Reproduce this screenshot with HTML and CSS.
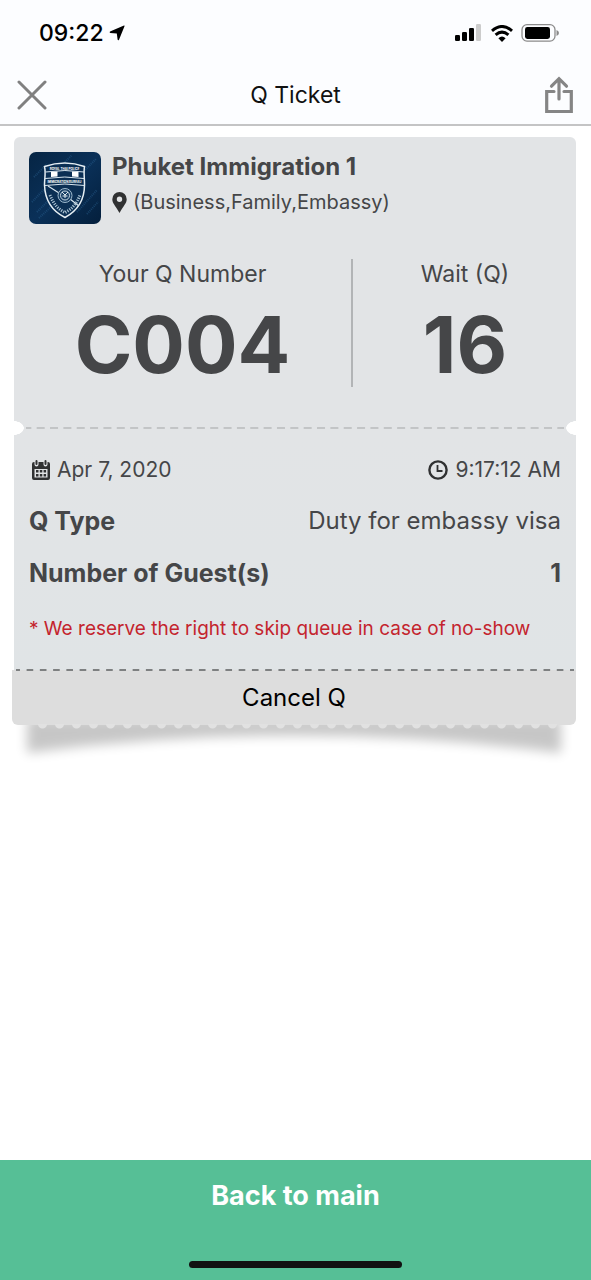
FILE: index.html
```html
<!DOCTYPE html>
<html lang="en">
<head>
<meta charset="utf-8">
<meta name="viewport" content="width=device-width, initial-scale=1">
<title>Q Ticket</title>
<link rel="stylesheet" href="styles.css">
</head>
<body>
<div class="screen">
  <header class="top">
    <div class="status">
      <div class="status-time">
        <span>09:22</span>
        <svg width="16" height="16" viewBox="0 0 16 16" aria-hidden="true"><path d="M1 6.400 15 .6Q15.800.4 15.500 1.200L10 14.800Q9 16 8.600 14.600L7.800 8.600 1.300 8Q0 7.300 1 6.400Z"/></svg>
      </div>
      <div class="status-icons">
        <svg width="28" height="18" viewBox="0 0 28 18" aria-hidden="true"><rect x="0" y="11" width="5" height="6" rx="1.300"/><rect x="7" y="8" width="5" height="9" rx="1.300"/><rect x="14" y="4" width="5" height="13" rx="1.300"/><rect x="21" y="0" width="5" height="17" rx="1.300" fill="#ccc"/></svg>
        <svg width="22" height="17" viewBox="0 0 22 17" aria-hidden="true"><g fill="none" stroke="#000" stroke-width="3"><path d="M1 5.800Q11-2.800 21 5.800"/><path d="M4.600 9.900Q11 4.300 17.400 9.900"/></g><path d="M7.400 13.200Q11 10 14.600 13.200L11 17Z"/></svg>
        <svg width="38" height="18" viewBox="0 0 38 18" aria-hidden="true"><rect x="1" y=".7" width="33" height="16.400" rx="5" fill="none" stroke="#8b8b8b" stroke-width="1.300"/><rect x="4" y="3" width="25" height="12" rx="2.400"/><path d="M35.500 6Q38 7 38 9T35.500 12Z" fill="#8b8b8b"/></svg>
      </div>
    </div>
    <nav class="nav">
      <button class="icon-button" type="button" aria-label="Close">
        <svg width="30" height="30" viewBox="0 0 30 30"><path d="m2 2 26 26M28 2 2 28" fill="none" stroke="#808080" stroke-width="3" stroke-linecap="round"/></svg>
      </button>
      <h1 class="nav-title">Q Ticket</h1>
      <button class="icon-button" type="button" aria-label="Share">
        <svg width="30" height="38" viewBox="0 0 30 38"><path d="M10 15.500H2.700V35.500H27.300V15.500H20M15 23V3M7.500 10.200 15 2.700 22.500 10.200" fill="none" stroke="#858585" stroke-width="3.200" stroke-linecap="round" stroke-linejoin="miter"/></svg>
      </button>
    </nav>
  </header>

  <main class="content">
    <article class="ticket">
      <section class="ticket-main">
        <div class="place">
          <svg class="logo" viewBox="0 0 72 72" role="img" aria-label="Royal Thai Police Immigration Bureau">
            <defs>
              <linearGradient id="navy" x1="0" y1="0" x2="1" y2="1"><stop offset="0" stop-color="#062544"/><stop offset=".5" stop-color="#0a3058"/><stop offset="1" stop-color="#041f3c"/></linearGradient>
            </defs>
            <rect width="72" height="72" rx="7" fill="url(#navy)"/>
            <path d="M3 50 22 30M8 60 26 42M5 25 18 12M48 60 68 38M52 22 67 7M10 66 24 53M58 62 69 50M36 10 43 3" stroke="#2c6494" stroke-width="2" stroke-dasharray="1 1" opacity=".45"/>
            <path d="M15.500 14.500Q36 7.500 55.500 14.500C54.500 20 55.500 25 55.500 33C55.500 49 48 59 36 65.500C23 59 16 49 15.500 33C15.500 26 17 21 15.500 14.500Z" fill="#0b2f54" stroke="#e4edf3" stroke-width="1.500"/>
            <path d="M16.500 20Q36 17 55 20M16 26.500Q36 23.500 55 26.500M16 33.500Q36 30.500 55.500 33.500" fill="none" stroke="#d8e5ee"/>
            <path d="M22 20 28.500 19.500V24.400L22 25ZM43 19.500 49.500 20V25L43 24.400Z" fill="#fff"/>
            <path d="m19 34 11 7M41 47l9 7" stroke="#d8e5ee" stroke-width="1.200"/>
            <circle cx="36" cy="43.500" r="7" fill="#183f65" stroke="#9db8cc"/><circle cx="36" cy="43.500" r="4.500" fill="none" stroke="#c8d9e5"/><path d="m33 40 3 3 3-3M36 42v4M33.500 44h5" fill="none" stroke="#dce8ef"/>
            <g class="logo-text"><text x="35.500" y="17.500">ROYAL THAI POLICE</text><text x="35.500" y="30.500">IMMIGRATION BUREAU</text></g>
            <path d="M21 43Q26 56 36 60.500Q46 56 51 43" fill="none" stroke="#a9c0d1" stroke-width="3" stroke-dasharray="1.200 1.200"/>
          </svg>
          <div class="place-text">
            <h2 class="place-name">Phuket Immigration 1</h2>
            <p class="place-detail">
              <svg width="15" height="21" viewBox="0 0 15 21" aria-hidden="true"><path d="M7.500 0A7.200 7.200 0 0 0 .3 7.200C.3 11 3 13 7.500 21 12 13 14.700 11 14.700 7.200A7.200 7.200 0 0 0 7.500 0Zm0 4.600a2.700 2.700 0 1 1 0 5.400 2.700 2.700 0 0 1 0-5.400Z" fill="#303132"/></svg>
              <span>(Business,Family,Embassy)</span>
            </p>
          </div>
        </div>
        <div class="numbers">
          <div class="number number-own"><p class="number-label">Your Q Number</p><p class="number-value">C004</p></div>
          <div class="number"><p class="number-label">Wait (Q)</p><p class="number-value">16</p></div>
        </div>
      </section>

      <div class="tear"><svg class="dashes" aria-hidden="true"><line x1="0" y1="1" x2="100%" y2="1" pathLength="403" stroke="#a3a5a6" stroke-width="1" stroke-dasharray="6 4" stroke-dashoffset="2"/></svg></div>

      <section class="details">
        <div class="row row-when">
          <span class="when"><svg width="18" height="20" viewBox="0 0 18 20" aria-hidden="true"><path d="M2 2H16Q18 2 18 4V6.300H0V4Q0 2 2 2ZM0 8H18V18Q18 20 16 20H2Q0 20 0 18Z" fill="#303132"/><path d="M0 6H18V9H0Z" fill="#303132"/><path d="M4.500 1V4.500M13.500 1V4.500" stroke="#e2e4e6" stroke-width="4" stroke-linecap="round"/><path d="M4.500 1V4M13.500 1V4" stroke="#303132" stroke-width="2" stroke-linecap="round"/><path d="M2.500 9H15.500V17.500H2.500Z" fill="#e2e4e6"/><path d="M4 10h2.500v2.500H4zM7.800 10h2.500v2.500H7.800zM11.600 10h2.500v2.500h-2.500zM4 14h2.500v2.500H4zM7.800 14h2.500v2.500H7.800zM11.600 14h2.500v2.500h-2.500z" fill="#303132"/></svg>Apr 7, 2020</span>
          <span class="when"><svg width="20" height="20" viewBox="0 0 20 20" aria-hidden="true"><circle cx="10" cy="10" r="8.600" fill="none" stroke="#303132" stroke-width="2.400"/><path d="M9.500 5V11H14.500" fill="none" stroke="#303132" stroke-width="1.800"/></svg>9:17:12 AM</span>
        </div>
        <div class="row"><strong>Q Type</strong><span class="row-value">Duty for embassy visa</span></div>
        <div class="row"><strong>Number of Guest(s)</strong><strong>1</strong></div>
        <p class="notice">* We reserve the right to skip queue in case of no-show</p>
      </section>

      <div class="stub">
        <svg class="dashes stub-dashes" aria-hidden="true"><line x1="0" y1="1" x2="100%" y2="1" pathLength="421" stroke="#7e8081" stroke-width="2" stroke-dasharray="5 5" stroke-dashoffset="2"/></svg>
        <svg class="shadow" viewBox="0 0 564 60" preserveAspectRatio="none" aria-hidden="true"><defs><filter id="soft" x="-5%" y="-50%" width="110%" height="200%"><feGaussianBlur stdDeviation="6"/></filter></defs><path d="M15 0H549V35Q282 0 15 35Z" fill="#000" opacity=".22" filter="url(#soft)"/></svg>
        <button class="cancel" type="button">Cancel Q</button>
        <div class="scallops"></div>
      </div>
    </article>
  </main>

  <footer class="footer">
    <button class="back" type="button">Back to main</button>
    <div class="home-bar"></div>
  </footer>
</div>
</body>
</html>
```
FILE: styles.css
```css
* { box-sizing: border-box; }
body { margin: 0; background: #fff; color: #454648; font-family: Inter, "Liberation Sans", sans-serif; }
h1, h2, p { margin: 0; }
svg { display: block; flex: none; }
button { margin: 0; padding: 0; border: 0; background: none; font: inherit; cursor: pointer; }

.screen { display: flex; flex-direction: column; min-height: 100vh; }
.top { background: #fcfdff; border-bottom: 2px solid #c4c4c5; }
.status { display: flex; justify-content: space-between; align-items: center; height: 66px; padding: 0 32px 0 39px; color: #000; }
.status-time { display: flex; align-items: center; gap: 5px; font-size: 23px; font-weight: 500; }
.status-icons { display: flex; align-items: center; gap: 8px; }
.nav { display: flex; justify-content: space-between; align-items: center; height: 58px; padding: 0 17px; }
.nav-title { color: #111; font-size: 23px; font-weight: 400; }

.content { flex: 1; padding: 11px 15px 0 14px; }
.ticket-main { padding: 15px 15px 0; border-radius: 6px 6px 0 0; background: #e2e4e6; }
.place { display: flex; gap: 11px; }
.logo { width: 72px; height: 72px; }
.logo-text { fill: #fff; font-size: 3px; font-weight: 700; text-anchor: middle; }
.place-name { font-size: 24px; line-height: 30px; font-weight: 700; }
.place-detail { display: flex; align-items: center; gap: 6px; margin-top: 6px; font-size: 20px; line-height: 28px; }
.numbers { display: grid; grid-template-columns: 324fr 208fr; margin-top: 35px; padding-bottom: 34px; }
.number { padding-left: 16px; text-align: center; }
.number-own { padding: 0 15px 0 0; border-right: 2px solid #b2b4b6; }
.number-label { font-size: 23px; line-height: 30px; }
.number-value { margin-top: 14px; font-size: 78px; line-height: 84px; font-weight: 700; }

.tear { display: flex; align-items: center; height: 14px; padding: 0 12px; background: radial-gradient(ellipse 10px 7px at left, #fff 95%, transparent) left / 50% 100% no-repeat, radial-gradient(ellipse 10px 7px at right, #fff 95%, transparent) right / 50% 100% no-repeat, #e2e4e6; }
.dashes { width: 100%; height: 2px; }

.details { display: flex; flex-direction: column; gap: 22px; padding: 21px 15px 28px; background: linear-gradient(#e2e4e6, #e0e4e6); }
.row { display: flex; justify-content: space-between; align-items: center; font-size: 25px; line-height: 30px; }
.row-value { font-size: 24px; }
.row-when { font-size: 21px; line-height: 28px; padding-left: 3px; }
.when { display: flex; align-items: center; gap: 7px; }
.notice { margin-top: 6px; color: #c4242e; font-size: 19px; line-height: 26px; }

.stub { position: relative; margin-left: -2px; }
.stub-dashes { position: absolute; top: -1px; left: 4px; width: calc(100% - 6px); }
.shadow { position: absolute; top: 48px; left: 0; width: 100%; height: 60px; overflow: visible; z-index: -1; }
.cancel { display: block; width: 100%; height: 55px; border-radius: 0 0 6px 6px; background: #ddd; color: #000; font-size: 24px; }
.scallops { height: 5px; margin: -1px 12px 0 22px; background: radial-gradient(circle at 50% 0, #e1e1e1 4px, transparent 5px) 0 0 / 17px 5px repeat-x; }

.footer { display: flex; flex-direction: column; align-items: center; justify-content: space-between; min-height: 120px; padding: 18px 0 12px; background: #56bf96; }
.back { width: 100%; color: #fff; font-size: 27px; line-height: 36px; font-weight: 700; }
.home-bar { width: 36%; height: 7px; border-radius: 4px; background: #111; }
```
